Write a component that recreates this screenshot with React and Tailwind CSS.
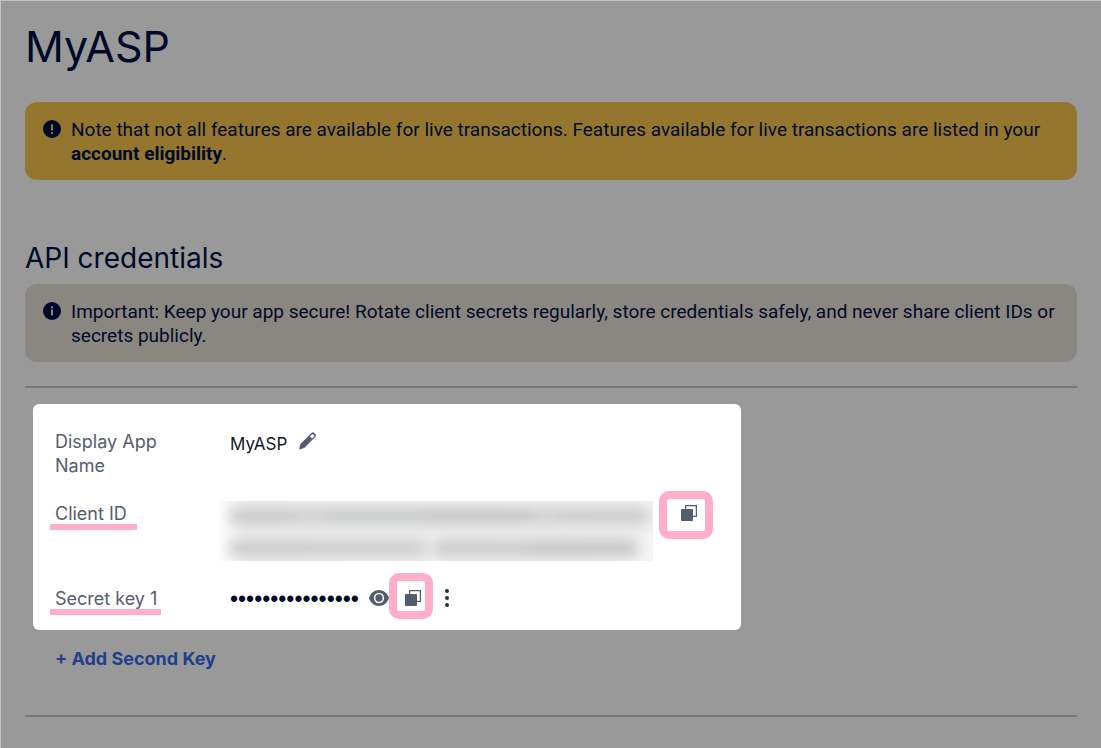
import React from "react";

function CopyIcon() {
  return (
    <svg width="16" height="16" viewBox="0 0 16 16" aria-hidden="true">
      <path d="M4.6 4V.6h10.800v10.800H12" fill="none" stroke="#545d6b" strokeWidth="1.3" />
      <rect y="4" width="12" height="12" rx="0.8" fill="#545d6b" />
    </svg>
  );
}

function PencilIcon() {
  return (
    <svg width="17" height="18" viewBox="0 0 17 18" aria-hidden="true">
      <path
        fill="#545d6b"
        fillRule="evenodd"
        d="M0 17.400l1.300-5.200L12.300 1.100a2 2 0 0 1 2.900 0l1 1a2 2 0 0 1 0 2.900L5.200 16.100zM10.900 4.300l2.100 2.100 2.500-2.400-2-2.100z"
      />
    </svg>
  );
}

function EyeIcon() {
  return (
    <svg width="20" height="16" viewBox="0 0 20 16" aria-hidden="true">
      <path d="M10 0C5.3 0 1.6 3.1 0 8c1.6 4.9 5.3 8 10 8s8.4-3.1 10-8c-1.6-4.9-5.3-8-10-8z" fill="#545d6b" />
      <circle cx="10" cy="8" r="4.4" fill="#545d6b" stroke="#fff" strokeWidth="1.5" />
    </svg>
  );
}

function NoticeIcon({ info }) {
  return (
    <svg className="shrink-0" width="18" height="18" viewBox="0 0 18 18" aria-hidden="true">
      <circle cx="9" cy="9" r="9" fill="#000a28" />
      {info ? (
        <path d="M8 4.2h2v2H8zM8 7.5h2v6H8z" fill="#8a8680" />
      ) : (
        <path d="M8 4.2h2v6.3H8zM8 12h2v2H8z" fill="#94762f" />
      )}
    </svg>
  );
}

function Redacted() {
  return (
    <div aria-hidden="true" className="mt-[11px] -ml-3.5 h-[60px] w-[437px] overflow-hidden bg-linear-to-r from-white via-[#f1f1f1] via-8% to-[#f5f5f5]">
      <div className="flex flex-col gap-3.5 pt-1.5 pr-1 pl-3.5 blur-[7px]">
        <div className="flex h-[18px]">
          <span className="w-16 bg-[#c9c9c9]" />
          <span className="w-8 bg-[#cfcfcf]" />
          <span className="w-24 bg-[#c8c9c9]" />
          <span className="w-28 bg-[#c6c7c7]" />
          <span className="w-6 bg-[#cfcfcf]" />
          <span className="flex-1 bg-[#cacaca]" />
        </div>
        <div className="mr-3 flex h-[18px]">
          <span className="w-20 bg-[#cacaca]" />
          <span className="w-[116px] bg-[#cdcdcd]" />
          <span className="ml-2 w-24 bg-[#cacaca]" />
          <span className="flex-1 bg-[#c6c6c6]" />
        </div>
      </div>
    </div>
  );
}

export default function App() {
  return (
    <main className="min-h-screen border-t border-l border-[#c4c4c4] bg-[#999] pr-6 pb-[27px] pl-6 font-['Inter',sans-serif] text-[18px] leading-6 text-[#000a28]">
      <h1 className="pt-[17px] text-[43px] leading-[56px]">MyASP</h1>

      <div role="note" className="mt-7 flex gap-2.5 rounded-xl bg-[#94762f] px-[18px] pt-[18px] pb-3.5 font-['Roboto',sans-serif] text-[19px]">
        <NoticeIcon />
        <p className="-mt-0.5">
          Note that not all features are available for live transactions. Features available for live transactions are listed in your{" "}
          <a href="#eligibility" className="font-bold">account eligibility</a>.
        </p>
      </div>

      <h2 className="mt-[60px] text-[28px] leading-9">API credentials</h2>

      <div role="note" className="mt-2 flex gap-2.5 rounded-xl bg-[#8a8680] px-[18px] pt-[18px] pb-3.5 font-['Roboto',sans-serif] text-[19px]">
        <NoticeIcon info />
        <p className="-mt-0.5">
          Important: Keep your app secure! Rotate client secrets regularly, store credentials safely, and never share client IDs or secrets publicly.
        </p>
      </div>

      <hr className="mt-6 border-t-2 border-[#777]" />

      <section className="mt-4 ml-2 flex max-w-[708px] flex-col gap-3 rounded-md bg-white px-[22px] pt-[26px] pb-[11px] text-[#545d6b]">
        <div className="flex">
          <div className="w-[175px] shrink-0 pr-14">Display App Name</div>
          <div className="flex items-start gap-3 pt-0.5 text-[17px] text-[#15181f]">
            <span>MyASP</span>
            <button type="button" aria-label="Edit name"><PencilIcon /></button>
          </div>
        </div>

        <div className="flex">
          <div className="w-[175px] shrink-0 pt-3">
            <span className="relative after:absolute after:top-[21px] after:-left-[5px] after:h-1.5 after:w-[87px] after:bg-[#ffaec9]">Client ID</span>
          </div>
          <Redacted />
          <button type="button" aria-label="Copy client ID" className="mt-px ml-1.5 flex h-12 w-[54px] rounded-[10px] border-8 border-[#ffaec9] pt-1.5 pl-3.5">
            <CopyIcon />
          </button>
        </div>

        <div className="flex">
          <div className="w-[175px] shrink-0 pt-3.5">
            <span className="relative after:absolute after:top-[21px] after:-left-[5px] after:h-1.5 after:w-[111px] after:bg-[#ffaec9]">Secret key 1</span>
          </div>
          <span className="w-[139px] shrink-0 pt-3.5 font-['Liberation_Sans',sans-serif] text-[23px] text-[#000a28]">••••••••••••••••</span>
          <button type="button" aria-label="Show secret key" className="flex pt-[17px]"><EyeIcon /></button>
          <button type="button" aria-label="Copy secret key" className="flex h-[46px] w-11 rounded-[10px] border-8 border-[#ffaec9] pt-[9px] pl-2">
            <CopyIcon />
          </button>
          <button type="button" aria-label="More options" className="ml-3 flex pt-4">
            <svg width="4" height="18" viewBox="0 0 4 18" aria-hidden="true" fill="#2c2e2f">
              <circle cx="2" cy="2" r="2" />
              <circle cx="2" cy="9" r="2" />
              <circle cx="2" cy="16" r="2" />
            </svg>
          </button>
        </div>
      </section>

      <button type="button" className="mt-[17px] ml-[30px] block font-bold text-[#213f8c]">+ Add Second Key</button>
      <hr className="mt-11 border-t-2 border-[#777]" />
    </main>
  );
}
